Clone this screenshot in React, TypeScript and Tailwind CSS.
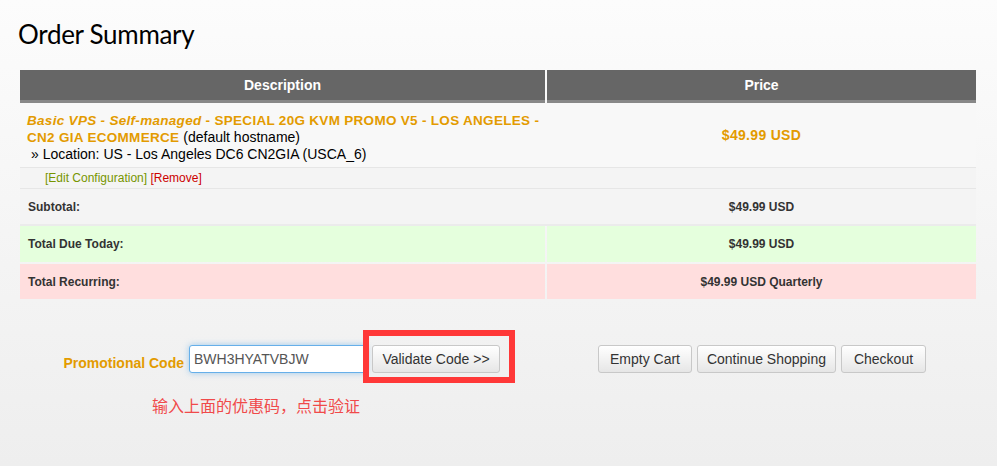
import React from "react";

const btn =
  "h-[28px] rounded-[3px] border border-[#c8c8c8] bg-gradient-to-b from-[#ffffff] to-[#e6e6e6] text-[14px] text-[#333] shadow-[inset_0_1px_0_#fff] flex items-center justify-center";

export default function App() {
  return (
    <div
      className="relative w-[997px] h-[466px] overflow-hidden bg-gradient-to-b from-[#fcfcfc] to-[#eeeeee]"
      style={{ fontFamily: '"Liberation Sans", Arial, sans-serif' }}
    >
      <h1
        className="pl-[18px] pt-[14px] h-[70px] text-[26px] leading-[40px] text-black tracking-[-0.3px]"
        style={{ fontFamily: 'Lato, "Open Sans", sans-serif' }}
      >
        Order Summary
      </h1>

      <div className="ml-[20px] w-[956px] flex flex-col">
        {/* header */}
        <div className="flex gap-[2px] h-[33px]">
          <div className="w-[525px] bg-[#666] border-b-[3px] border-[#888] flex items-center justify-center text-white font-bold text-[14px]">
            Description
          </div>
          <div className="flex-1 bg-[#666] border-b-[3px] border-[#888] flex items-center justify-center text-white font-bold text-[14px]">
            Price
          </div>
        </div>

        {/* product row */}
        <div className="flex gap-[2px] h-[65px] bg-[#f8f8f8] border-b border-[#e6e6e6]">
          <div className="w-[525px] pl-[7px] pt-[10px] text-[14px] leading-[16px] whitespace-nowrap">
            <div className="text-[#e39b00] font-bold text-[13.5px] tracking-[0.3px]">
              <i>Basic VPS - Self-managed</i> - SPECIAL 20G KVM PROMO V5 - LOS ANGELES -
            </div>
            <div>
              <span className="text-[#e39b00] font-bold text-[13.5px] tracking-[0.3px]">
                CN2 GIA ECOMMERCE
              </span>{" "}
              <span className="text-black">(default hostname)</span>
            </div>
            <div className="pl-[4px] text-black">» Location: US - Los Angeles DC6 CN2GIA (USCA_6)</div>
          </div>
          <div className="flex-1 flex items-center justify-center text-[#e39b00] font-bold text-[14px] tracking-[0.3px]">
            $49.99 USD
          </div>
        </div>

        {/* links row */}
        <div className="flex h-[21px] bg-[#f4f4f4] border-b border-[#e6e6e6]">
          <div className="pl-[25px] pt-[3px] text-[12px] leading-[14px]">
            <span className="text-[#779500]">[Edit Configuration]</span>{" "}
            <span className="text-[#cc0000]">[Remove]</span>
          </div>
        </div>

        {/* subtotal */}
        <div className="flex gap-[2px] h-[37px] bg-[#f4f4f4] border-b-2 border-[#ebebeb]">
          <div className="w-[525px] pl-[8px] flex items-center text-[12px] font-bold text-[#333]">
            Subtotal:
          </div>
          <div className="flex-1 flex items-center justify-center text-[12px] font-bold text-[#333]">
            $49.99 USD
          </div>
        </div>

        {/* total due */}
        <div className="flex gap-[2px] h-[36px] mb-[2px]">
          <div className="w-[525px] bg-[#e5ffdd] pl-[8px] flex items-center text-[12px] font-bold text-[#333]">
            Total Due Today:
          </div>
          <div className="flex-1 bg-[#e5ffdd] flex items-center justify-center text-[12px] font-bold text-[#333]">
            $49.99 USD
          </div>
        </div>

        {/* total recurring */}
        <div className="flex gap-[2px] h-[35px]">
          <div className="w-[525px] bg-[#ffdede] pl-[8px] flex items-center text-[12px] font-bold text-[#333]">
            Total Recurring:
          </div>
          <div className="flex-1 bg-[#ffdede] flex items-center justify-center text-[12px] font-bold text-[#333]">
            $49.99 USD Quarterly
          </div>
        </div>
      </div>

      {/* promo + buttons */}
      <div className="flex mt-[46px]">
        <div className="w-[540px] flex flex-col">
          <div className="flex items-start">
            <div className="w-[186px] flex justify-end pr-[2px] whitespace-nowrap text-[#e39b00] font-bold text-[14px] mt-[8px]">
              Promotional Code
            </div>
            <div className="relative flex items-center ml-[3px]">
              <input
                readOnly
                value="BWH3HYATVBJW"
                className="w-[178px] h-[28px] rounded-[3px] border border-[#66afe9] shadow-[0_0_6px_rgba(102,175,233,0.6)] bg-white px-[4px] text-[14px] text-[#555] outline-none"
                style={{ fontFamily: '"Liberation Sans", Arial, sans-serif' }}
              />
              <div className="ml-[5px] w-[128px] h-[28px] rounded-[3px] border border-[#c8c8c8] bg-gradient-to-b from-[#ffffff] to-[#e6e6e6] text-[14px] text-[#333] flex items-center justify-center">
                Validate Code &gt;&gt;
              </div>
              <div className="absolute left-[174px] top-[-15px] w-[152px] h-[53px] border-[6px] border-[#ff3838] pointer-events-none" />
            </div>
          </div>
          <div
            className="ml-[152px] mt-[21px] text-[16px] leading-[20px] text-[#f04a4a]"
            style={{ fontFamily: '"Noto Sans CJK SC", sans-serif' }}
          >
            输入上面的优惠码，点击验证
          </div>
        </div>
        <div className="flex ml-[58px] gap-[5px]">
          <div className={btn + " w-[94px]"}>Empty Cart</div>
          <div className={btn + " w-[139px]"}>Continue Shopping</div>
          <div className={btn + " w-[85px]"}>Checkout</div>
        </div>
      </div>
    </div>
  );
}
